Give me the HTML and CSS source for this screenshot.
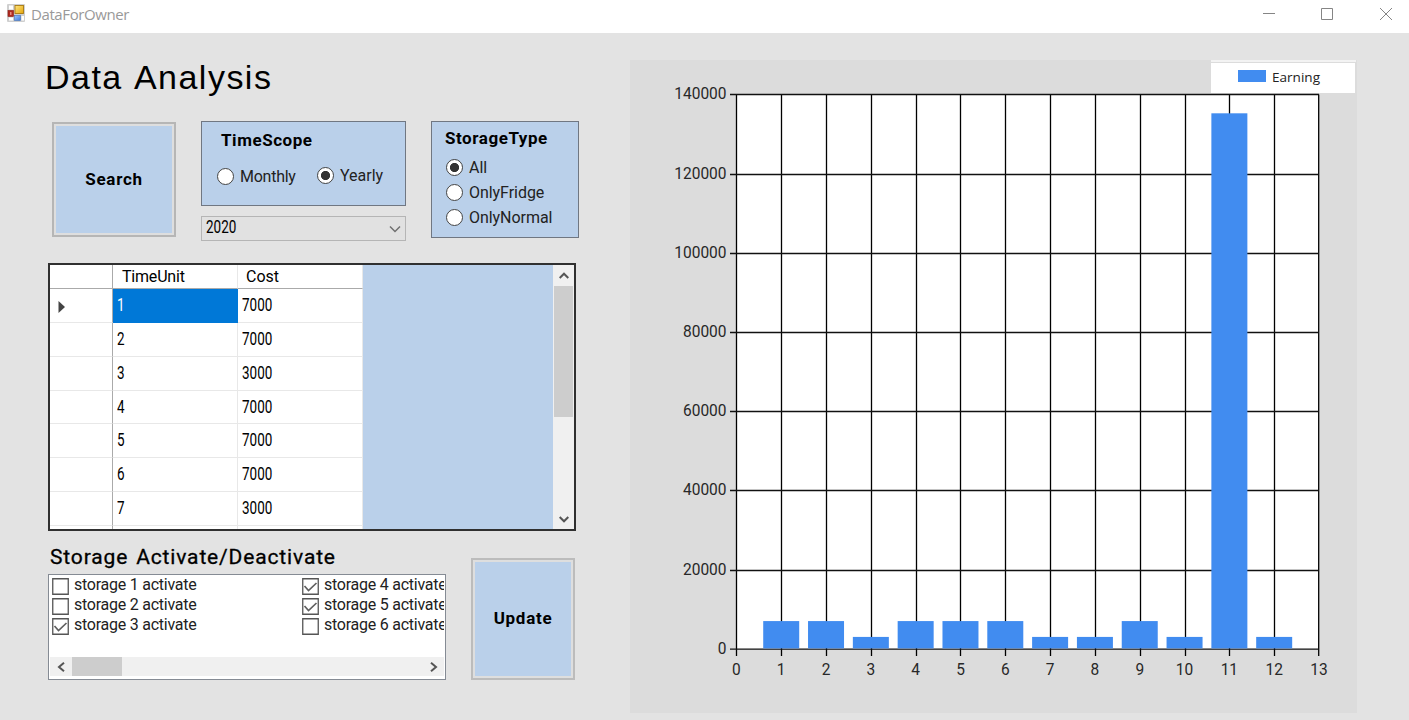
FILE: index.html
```html
<!DOCTYPE html>
<html lang="en">
<head>
<meta charset="utf-8">
<title>DataForOwner</title>
<link rel="stylesheet" href="styles.css">
</head>
<body>
<header class="titlebar">
  <svg class="app-icon" width="18" height="18" viewBox="0 0 18 18">
    <defs>
      <linearGradient id="gold" x1="0" y1="0" x2="1" y2="1"><stop offset="0" stop-color="#ffe680"/><stop offset="1" stop-color="#e5a50a"/></linearGradient>
      <linearGradient id="blue" x1="0" y1="0" x2="1" y2="1"><stop offset="0" stop-color="#9cc4ff"/><stop offset="1" stop-color="#3c78dc"/></linearGradient>
    </defs>
    <rect width="18" height="18" rx="1" fill="#cfcfcf"/>
    <path d="M2 1.500h4v4H2zM2 13.500h4v3H2zM14.500 12h2.500v4.500h-2.500z" fill="#fff"/>
    <rect x="1" y="6.500" width="5.500" height="6" fill="#b02a20" stroke="#8b1c16" stroke-width=".6"/>
    <rect x="3" y="8" width="1.500" height="3" fill="#e88c80"/>
    <rect x="8" y="1.500" width="8.500" height="8" fill="url(#gold)" stroke="#a87a10" stroke-width=".9"/>
    <rect x="7.500" y="11.500" width="6" height="5" fill="url(#blue)" stroke="#4472b8" stroke-width=".6"/>
  </svg>
  <span class="window-title">DataForOwner</span>
  <svg class="window-controls" width="132" height="14" viewBox="0 0 132 14" fill="none" stroke="#858585">
    <path d="M1 6.500h12M59.500 1.500h11v11h-11zM118 1l12 12M130 1l-12 12"/>
  </svg>
</header>
<main class="window">
  <section class="controls">
    <h1 class="heading"><span>Data Analysis</span></h1>
    <div class="filters">
      <button class="big-button search"><span>Search</span></button>
      <div class="scope-column">
        <div class="group scope">
          <b class="group-title">TimeScope</b>
          <div class="scope-options">
            <label class="option monthly"><i class="radio"></i><span>Monthly</span></label>
            <label class="option yearly"><i class="radio on"></i><span>Yearly</span></label>
          </div>
        </div>
        <div class="combo"><span class="num">2020</span>
          <svg width="12" height="8" viewBox="0 0 12 8" fill="none" stroke="#707070" stroke-width="1.500"><path d="M1 1.500l5 5 5-5"/></svg>
        </div>
      </div>
      <div class="group storage-type">
        <b class="group-title">StorageType</b>
        <label class="option all"><i class="radio on"></i><span>All</span></label>
        <label class="option fridge"><i class="radio"></i><span>OnlyFridge</span></label>
        <label class="option normal"><i class="radio"></i><span>OnlyNormal</span></label>
      </div>
    </div>
    <div class="grid">
      <div class="rows">
        <div class="row head"><div class="cell"></div><div class="cell"><span class="h-unit">TimeUnit</span></div><div class="cell"><span class="h-cost">Cost</span></div></div>
        <div class="row"><div class="cell"><svg width="8" height="12" viewBox="0 0 8 12"><path d="M.5 0l6.500 6-6.500 6z" fill="#444"/></svg></div><div class="cell selected"><span class="num">1</span></div><div class="cell"><span class="num">7000</span></div></div>
        <div class="row"><div class="cell"></div><div class="cell"><span class="num">2</span></div><div class="cell"><span class="num">7000</span></div></div>
        <div class="row"><div class="cell"></div><div class="cell"><span class="num">3</span></div><div class="cell"><span class="num">3000</span></div></div>
        <div class="row"><div class="cell"></div><div class="cell"><span class="num">4</span></div><div class="cell"><span class="num">7000</span></div></div>
        <div class="row"><div class="cell"></div><div class="cell"><span class="num">5</span></div><div class="cell"><span class="num">7000</span></div></div>
        <div class="row"><div class="cell"></div><div class="cell"><span class="num">6</span></div><div class="cell"><span class="num">7000</span></div></div>
        <div class="row"><div class="cell"></div><div class="cell"><span class="num">7</span></div><div class="cell"><span class="num">3000</span></div></div>
        <div class="row"><div class="cell"></div><div class="cell"></div><div class="cell"></div></div>
      </div>
      <div class="scroll-v">
        <svg width="10" height="7" viewBox="0 0 10 7" fill="none" stroke="#555" stroke-width="2"><path d="M.7 6L5 1.700 9.300 6"/></svg>
        <div class="thumb"></div>
        <svg class="down" width="10" height="7" viewBox="0 0 10 7" fill="none" stroke="#555" stroke-width="2"><path d="M.7 1L5 5.300 9.300 1"/></svg>
      </div>
    </div>
    <div class="bottom">
      <div class="activation">
        <h2 class="subheading"><span>Storage Activate/Deactivate</span></h2>
        <div class="checklist">
          <div class="columns">
            <div class="column">
              <label class="check"><svg class="box" viewBox="0 0 17 17"><path class="frame" d="M.75.75h15.500v15.500H.75z"/></svg><span>storage 1 activate</span></label>
              <label class="check"><svg class="box" viewBox="0 0 17 17"><path class="frame" d="M.75.75h15.500v15.500H.75z"/></svg><span>storage 2 activate</span></label>
              <label class="check"><svg class="box" viewBox="0 0 17 17"><path class="frame" d="M.75.75h15.500v15.500H.75z"/><path class="tick" d="M2.500 8l4 4.500 8-7.500"/></svg><span>storage 3 activate</span></label>
            </div>
            <div class="column">
              <label class="check"><svg class="box" viewBox="0 0 17 17"><path class="frame" d="M.75.75h15.500v15.500H.75z"/><path class="tick" d="M2.500 8l4 4.500 8-7.500"/></svg><span>storage 4 activate</span></label>
              <label class="check"><svg class="box" viewBox="0 0 17 17"><path class="frame" d="M.75.75h15.500v15.500H.75z"/><path class="tick" d="M2.500 8l4 4.500 8-7.500"/></svg><span>storage 5 activate</span></label>
              <label class="check"><svg class="box" viewBox="0 0 17 17"><path class="frame" d="M.75.75h15.500v15.500H.75z"/></svg><span>storage 6 activate</span></label>
            </div>
          </div>
          <div class="scroll-h">
            <svg width="8" height="10" viewBox="0 0 8 10" fill="none" stroke="#555" stroke-width="2"><path d="M7 .8L2 5l5 4.200"/></svg>
            <div class="thumb"></div>
            <svg class="right" width="8" height="10" viewBox="0 0 8 10" fill="none" stroke="#555" stroke-width="2"><path d="M1 .8L6 5 1 9.200"/></svg>
          </div>
        </div>
      </div>
      <button class="big-button update"><span>Update</span></button>
    </div>
  </section>
  <section class="chart-panel">
    <svg id="chart" width="727" height="653" viewBox="630 60 727 653"></svg>
  </section>
</main>
<script src="chart.js"></script>
</body>
</html>
```
FILE: styles.css
```css
* { box-sizing: border-box; }
body { margin: 0; width: 1409px; height: 720px; overflow: hidden; background: #e3e3e3; color: #000; font: 16px/20px Roboto, "Liberation Sans", sans-serif; }
span { display: inline-block; white-space: nowrap; transform-origin: 0 50%; }
.titlebar { display: flex; height: 33px; padding: 4px 15px 0 7px; background: #fff; }
.app-icon { display: block; }
.window-title { margin: 0 0 0 6px; font: 15px/20px "Open Sans", "Noto Sans", sans-serif; letter-spacing: -.4px; color: #999; }
.window-controls { margin: 3px 0 0 auto; }
.window { display: flex; height: 687px; }
.controls { width: 630px; padding: 24px 0 0 48px; }
.heading { margin: 0 0 0 -3px; height: 64px; font: 400 33px/42px "Liberation Sans", Arial, sans-serif; letter-spacing: 1.450px; word-spacing: 2px; }
.heading span { transform: scaleX(1.03); }
.filters { display: flex; height: 142px; padding-left: 4px; }
.big-button { border: 2px solid #b6b6b6; padding: 0 0 2px; background: #bad0ea; box-shadow: inset 0 0 0 2px #dedede; font: 700 17px/20px Roboto, sans-serif; letter-spacing: .7px; color: #000; }
.search { width: 124px; height: 115px; margin-top: 1px; }
.scope-column { width: 205px; margin-left: 25px; }
.group { border: 1.500px solid #707782; background: #bad0ea; }
.group-title { display: block; font-size: 17px; line-height: 20px; letter-spacing: .55px; white-space: nowrap; }
.scope { height: 85px; padding: 8px 0 0 19px; }
.scope-options { display: flex; margin: 14px 0 0 -4px; gap: 19px; }
.option { display: flex; align-items: center; gap: 6px; height: 25px; font-size: 16px; color: #222; }
.yearly { margin-top: -1px; }
.monthly { width: 81px; }
.monthly span { letter-spacing: -.25px; }
.radio { width: 17px; height: 17px; flex: none; border: 1.500px solid #444; border-radius: 50%; background: #fff; }
.radio.on { background: radial-gradient(circle, #333 0 4.200px, #fff 5px); }
.combo { display: flex; justify-content: space-between; align-items: center; height: 25px; margin-top: 10px; padding: 0 4px 2px 4px; border: 1.500px solid #b5b5b5; background: #e1e1e1; }
.combo svg { margin-top: 3px; }
.combo .num { margin-top: -1px; }
.num { font-size: 17.500px; transform: scaleX(.77); }
.storage-type { width: 148px; height: 117px; margin-left: 25px; padding: 6px 0 0 13px; }
.storage-type .all { margin-top: 7px; }
.storage-type .option { margin-left: 1px; letter-spacing: -.05px; }
.grid { display: flex; width: 528px; height: 268px; border: 2px solid #303030; background: #bad0ea; overflow: hidden; }
.rows { width: 313px; flex: none; margin-right: 190px; }
.row { display: grid; grid-template-columns: 63px 125px 125px; height: 33.800px; background: #fff; }
.row.head { height: 24.300px; }
.cell { padding: 6px 0 0 3.500px; border-right: 1px solid #e8e8e8; border-bottom: 1px solid #e8e8e8; }
.cell:first-child { padding: 12px 0 0 8px; border-right: 1.500px solid #aaa; }
.head .cell { padding: 2px 0 0 9px; border-bottom: 1.500px solid #aaa; }
.head .cell:last-child { padding-left: 8px; }
.h-unit { letter-spacing: -.2px; }
.cell svg { display: block; }
.selected { background: #0078d7; color: #fff; border-color: #0078d7; }
.scroll-v { display: flex; flex-direction: column; align-items: center; width: 21px; padding: 7px 0; background: #f0f0f0; }
.scroll-v svg { flex: none; }
.scroll-v .thumb { width: 19px; height: 131px; margin-top: 7px; background: #cdcdcd; }
.scroll-v .down { margin-top: auto; margin-bottom: -1px; }
.bottom { display: flex; padding-top: 14px; }
.activation { width: 398px; }
.subheading { margin: 0 0 0 2px; height: 29px; font-size: 21px; line-height: 25px; font-weight: 400; letter-spacing: .85px; word-spacing: 2px; -webkit-text-stroke: .3px #000; }
.checklist { display: flex; flex-direction: column; height: 106px; border: 1.500px solid #858b94; background: #fff; padding: 1px; overflow: hidden; }
.columns { display: flex; padding-left: 2px; height: 80px; overflow-x: clip; }
.column { width: 250px; flex: none; }
.check { display: flex; height: 20px; gap: 5px; color: #222; line-height: 19px; letter-spacing: -.25px; }
.check span { margin-top: -1px; }
.box { width: 17px; height: 17px; margin-top: 2px; fill: none; }
.frame { stroke: #555; stroke-width: 1.300; }
.tick { stroke: #606060; stroke-width: 1.700; }
.scroll-h { display: flex; align-items: center; height: 19px; margin-top: 1px; padding: 0 6px 0 7px; background: #f0f0f0; }
.scroll-h .thumb { width: 50px; height: 19px; margin-left: 7px; background: #cdcdcd; }
.scroll-h .right { margin-left: auto; }
.update { width: 104px; height: 122px; margin: 13px 0 0 25px; border-color: #bcbcbc; }
.chart-panel { width: 727px; height: 653px; margin-top: 27px; background: #dcdcdc; }
.chart-panel svg { display: block; }
.axis-label { font: 16.500px Roboto, sans-serif; fill: #282828; }
.legend-label { font: 13.500px "Open Sans", sans-serif; fill: #222; }
```
FILE: chart.js
```
const costs = [7000, 7000, 3000, 7000, 7000, 7000, 3000, 3000, 7000, 3000, 135200, 3000];
const plot = { left: 736.4, right: 1319, top: 95, bottom: 649.5, maxX: 13, maxY: 140000 };
const xAt = v => plot.left + (plot.right - plot.left) * v / plot.maxX;
const yAt = v => plot.bottom - (plot.bottom - plot.top) * v / plot.maxY;
const parts = [];
const label = (text, x, y, anchor, width) =>
  parts.push(`<text class="axis-label" x="${x}" y="${y}" text-anchor="${anchor}" textLength="${width}" lengthAdjust="spacingAndGlyphs">${text}</text>`);

parts.push(`<rect x="736" y="94" width="583" height="555" fill="#fff"/>`);
for (let v = 0; v <= plot.maxX; v++) {
  const x = Math.min(Math.round(xAt(v)) + 0.5, 1318.7);
  parts.push(`<path d="M${x} 94.500V656" stroke="#000" stroke-width="1.3"/>`);
  label(v, xAt(v), 674.5, "middle", String(v).length * 8.7);
}
for (let v = 0; v <= plot.maxY; v += 20000) {
  const y = Math.floor(yAt(v) - 0.1) + 0.5 - (v === 0 ? 0.3 : 0);
  parts.push(`<path d="M730 ${y}H1319" stroke="#111" stroke-width="1.3"/>`);
  label(v, 726.5, y + 4.5, "end", String(v).length * 8.7);
}
costs.forEach((cost, i) => {
  const y = yAt(cost) - 0.7;
  parts.push(`<rect x="${xAt(i + 1) - 18}" y="${y}" width="36" height="${648.4 - y}" fill="#418cf0"/>`);
});
parts.push(`<path d="M1211 61H1356" stroke="#f3f3f3" stroke-width="2"/>
<rect x="1211" y="63" width="144" height="30" fill="#fff"/>
<rect x="1238" y="70" width="28" height="12" fill="#418cf0"/>
<text class="legend-label" x="1272" y="81.500" textLength="48" lengthAdjust="spacingAndGlyphs">Earning</text>`);
document.getElementById("chart").innerHTML = parts.join("");
```
